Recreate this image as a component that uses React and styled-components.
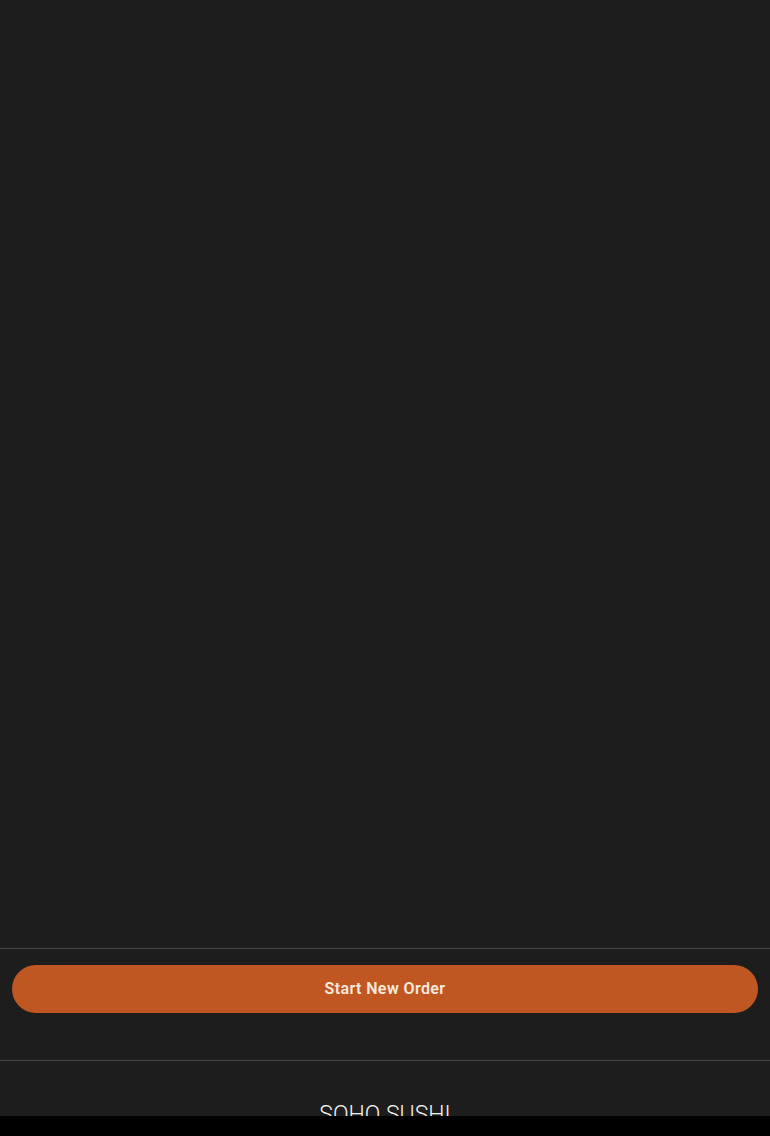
import React from 'react';
import styled, { createGlobalStyle } from 'styled-components';

const GlobalStyle = createGlobalStyle`
  html, body {
    margin: 0;
    padding: 0;
    background: #1d1d1d;
    font-family: Roboto, "Liberation Sans", sans-serif;
  }
`;

const Page = styled.div`
  display: flex;
  flex-direction: column;
  min-height: 100vh;
  background: #1d1d1d;
`;

const Content = styled.main`
  height: 948px;
`;

const ActionBar = styled.div`
  border-top: 1px solid #454545;
  border-bottom: 1px solid #454545;
  padding: 16px 12px 47px;
`;

const OrderButton = styled.button`
  display: block;
  width: 100%;
  height: 48px;
  padding: 0 0 2px;
  border: none;
  border-radius: 24px;
  background: #c05723;
  color: #f6e9de;
  font-family: Roboto, "Liberation Sans", sans-serif;
  font-size: 16px;
  font-weight: 600;
  letter-spacing: 0.4px;
  cursor: pointer;
`;

const Footer = styled.footer`
  display: flex;
  justify-content: center;
  padding: 40px 0 60px;
`;

const Brand = styled.div`
  color: #f2f2f2;
  font-family: Roboto, "Liberation Sans", sans-serif;
  font-weight: 300;
  font-size: 23px;
  letter-spacing: 0;
`;

const BottomBar = styled.div`
  position: fixed;
  left: 0;
  right: 0;
  bottom: 0;
  height: 20px;
  background: #000;
`;

const App = () => {
  return (
    <>
      <GlobalStyle />
      <Page>
        <Content />
        <ActionBar>
          <OrderButton type="button">Start New Order</OrderButton>
        </ActionBar>
        <Footer>
          <Brand>SOHO SUSHI</Brand>
        </Footer>
      </Page>
      <BottomBar />
    </>
  );
};

export default App;
